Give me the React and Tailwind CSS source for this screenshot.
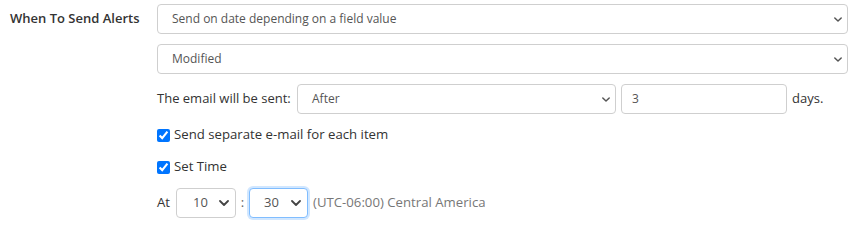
import React from "react";

function Chevron({ className = "" }) {
  return (
    <svg viewBox="0 0 10 6" className={className} fill="none" stroke="currentColor" strokeWidth="1.8" strokeLinecap="round" strokeLinejoin="round">
      <path d="M1 1l4 4 4-4" />
    </svg>
  );
}

function FakeSelect({ value, className = "", focus = false, small = false }) {
  return (
    <div
      className={
        "flex items-center justify-between rounded-[4px] border bg-white " +
        (focus ? "border-[#80bdff] shadow-[0_0_0_2px_rgba(0,123,255,0.18)] " : "border-[#cfcfcf] ") +
        className
      }
    >
      <span className={small ? "text-[13px] text-[#555]" : "text-[12px] text-[#555]"}>{value}</span>
      {small ? (
        <Chevron className="w-[10px] h-[6px] text-[#444]" />
      ) : (
        <Chevron className="w-[8px] h-[5px] text-[#555]" />
      )}
    </div>
  );
}

export default function App() {
  return (
    <div className="w-[855px] h-[231px] bg-white text-[#333] font-['Open_Sans','Noto_Sans',sans-serif]">
      <div className="flex pt-[4px]">
        <div className="w-[157px] pl-[10px] pt-[5px] text-[13px] font-semibold text-[#333]">When To Send Alerts</div>
        <div className="w-[691px] flex flex-col">
          <FakeSelect value="Send on date depending on a field value" className="h-[30px] pl-[14px] pr-[5px]" />
          <FakeSelect value="Modified" className="h-[30px] pl-[14px] pr-[5px] mt-[10px]" />
          <div className="flex items-center mt-[10px] h-[30px]">
            <span className="text-[13px] text-[#333] w-[140px]">The email will be sent:</span>
            <FakeSelect value="After" className="h-[30px] w-[319px] pl-[14px] pr-[5px]" />
            <div className="ml-[5px] h-[30px] w-[166px] rounded-[4px] border border-[#cfcfcf] flex items-center pl-[10px] text-[12px] text-[#555]">3</div>
            <span className="ml-[5px] text-[13px] text-[#333]">days.</span>
          </div>
          <label className="flex items-center mt-[13px] h-[16px] text-[13.2px] text-[#333]">
            <input type="checkbox" defaultChecked className="w-[13px] h-[13px] m-0 mr-[4px] accent-[#0075ff]" />
            Send separate e-mail for each item
          </label>
          <label className="flex items-center mt-[16px] h-[16px] text-[13.2px] text-[#333]">
            <input type="checkbox" defaultChecked className="w-[13px] h-[13px] m-0 mr-[4px] accent-[#0075ff]" />
            Set Time
          </label>
          <div className="flex items-center mt-[13px] h-[30px]">
            <span className="text-[13.2px] text-[#333] w-[19px]">At</span>
            <FakeSelect small value="10" className="h-[30px] w-[60px] pl-[16px] pr-[6px]" />
            <span className="text-[13.2px] text-[#666] w-[13px] text-center">:</span>
            <FakeSelect small focus value="30" className="h-[30px] w-[59px] pl-[14px] pr-[6px]" />
            <span className="ml-[5px] text-[13.2px] text-[#777]">(UTC-06:00) Central America</span>
          </div>
        </div>
      </div>
    </div>
  );
}
